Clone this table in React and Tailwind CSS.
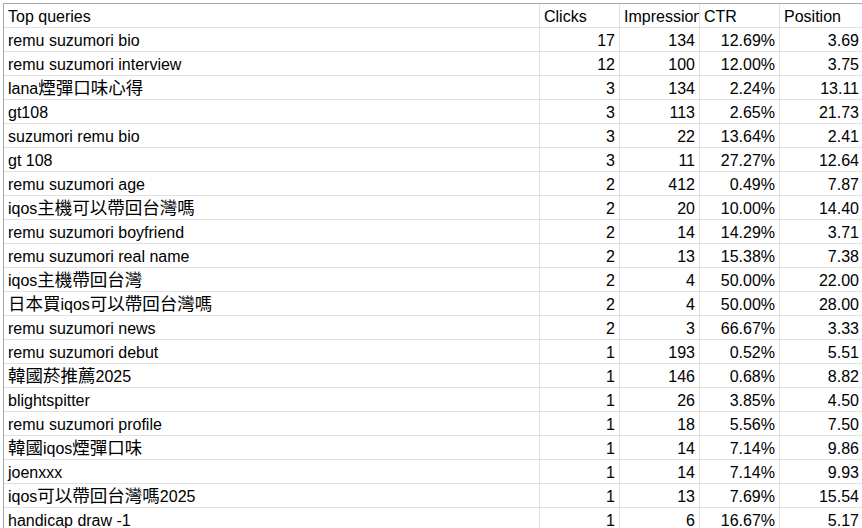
import React from "react";

const rows = [
  ["remu suzumori bio", "17", "134", "12.69%", "3.69"],
  ["remu suzumori interview", "12", "100", "12.00%", "3.75"],
  ["lana煙彈口味心得", "3", "134", "2.24%", "13.11"],
  ["gt108", "3", "113", "2.65%", "21.73"],
  ["suzumori remu bio", "3", "22", "13.64%", "2.41"],
  ["gt 108", "3", "11", "27.27%", "12.64"],
  ["remu suzumori age", "2", "412", "0.49%", "7.87"],
  ["iqos主機可以帶回台灣嗎", "2", "20", "10.00%", "14.40"],
  ["remu suzumori boyfriend", "2", "14", "14.29%", "3.71"],
  ["remu suzumori real name", "2", "13", "15.38%", "7.38"],
  ["iqos主機帶回台灣", "2", "4", "50.00%", "22.00"],
  ["日本買iqos可以帶回台灣嗎", "2", "4", "50.00%", "28.00"],
  ["remu suzumori news", "2", "3", "66.67%", "3.33"],
  ["remu suzumori debut", "1", "193", "0.52%", "5.51"],
  ["韓國菸推薦2025", "1", "146", "0.68%", "8.82"],
  ["blightspitter", "1", "26", "3.85%", "4.50"],
  ["remu suzumori profile", "1", "18", "5.56%", "7.50"],
  ["韓國iqos煙彈口味", "1", "14", "7.14%", "9.86"],
  ["joenxxx", "1", "14", "7.14%", "9.93"],
  ["iqos可以帶回台灣嗎2025", "1", "13", "7.69%", "15.54"],
  ["handicap draw -1", "1", "6", "16.67%", "5.17"],
];

const cell = "h-[24px] border-r border-b border-[#e1e1e1] flex items-end overflow-hidden whitespace-nowrap";

// CJK runs render a bit larger than the latin text, like the sheet's fallback font
function Mixed({ text }) {
  const parts = text.split(/([\u3000-\u9fff]+)/).filter(Boolean);
  return parts.map((p, i) =>
    /[\u3000-\u9fff]/.test(p) ? (
      <span key={i} className="text-[17.5px]">{p}</span>
    ) : (
      <span key={i}>{p}</span>
    )
  );
}

function Row({ values, header }) {
  return (
    <div className="grid grid-cols-[536px_80px_80px_80px_84px]">
      {values.map((v, i) => (
        <div
          key={i}
          className={`${cell} ${header || i === 0 ? "justify-start pl-[4px]" : "justify-end pr-[4px]"}`}
        >
          <span className="leading-[20px]">
            <Mixed text={v} />
          </span>
        </div>
      ))}
    </div>
  );
}

export default function App() {
  return (
    <div className="h-[528px] w-[862px] overflow-hidden bg-white pt-[3px] pl-[3px] text-[16px] text-black [font-family:'Liberation_Sans','Noto_Sans_CJK_TC',sans-serif]">
      <div className="border-t border-l border-[#a6a6a6]">
        <Row header values={["Top queries", "Clicks", "Impressions", "CTR", "Position"]} />
        {rows.map((r, i) => (
          <Row key={i} values={r} />
        ))}
      </div>
    </div>
  );
}
